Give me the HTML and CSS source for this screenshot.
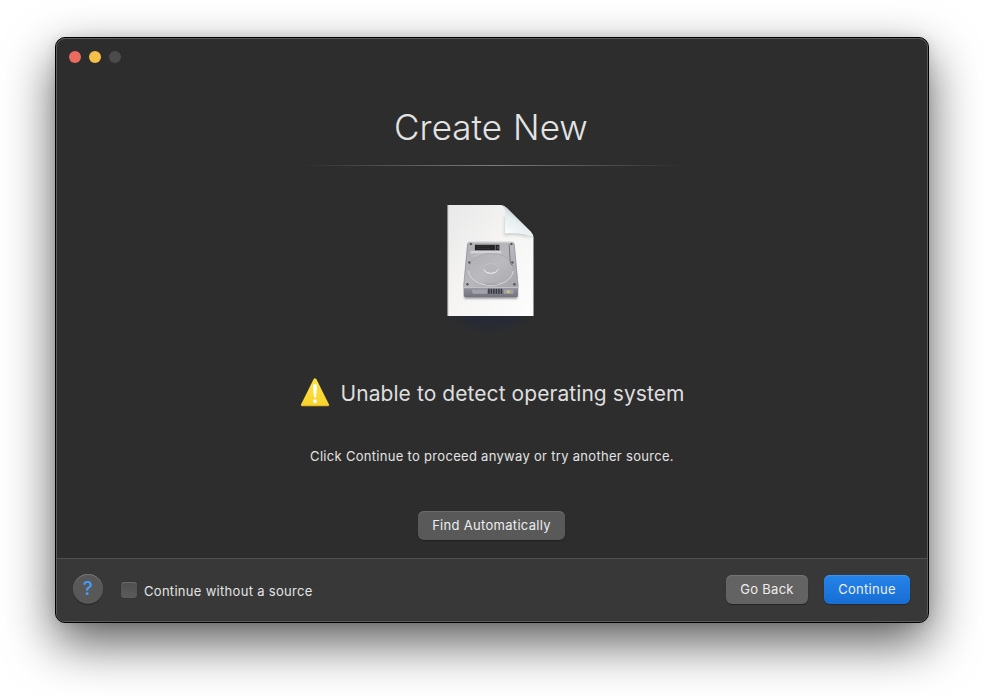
FILE: index.html
```html
<!DOCTYPE html>
<html lang="en">
<head>
<meta charset="utf-8">
<title>Create New</title>
<link rel="stylesheet" href="styles.css">
</head>
<body>
<div class="window">
  <div class="frame">
    <header class="titlebar">
      <span class="light close"></span><span class="light minimize"></span><span class="light disabled"></span>
    </header>
    <main class="content">
      <h1>Create New</h1>
      <div class="rule"></div>
      <svg class="document" width="104" height="140" viewBox="439 200 104 140" aria-hidden="true">
        <defs>
          <linearGradient id="paper" x1="0" y1="0" x2="1" y2="1"><stop offset="0" stop-color="#e8e8e8"/><stop offset=".45" stop-color="#f5f4f3"/><stop offset="1" stop-color="#fdfdfd"/></linearGradient>
          <linearGradient id="curl" x1=".65" y1=".35" x2=".2" y2="1"><stop offset="0" stop-color="#c6d0d4"/><stop offset=".3" stop-color="#e6eef0"/><stop offset="1" stop-color="#fcffff"/></linearGradient>
          <linearGradient id="metal" x1="0" y1="0" x2="1" y2="1"><stop offset="0" stop-color="#b0b0b4"/><stop offset=".5" stop-color="#b8b8bc"/><stop offset="1" stop-color="#a4a4a9"/></linearGradient>
          <linearGradient id="platter" x1="0" y1="0" x2="1" y2="1"><stop offset="0" stop-color="#b0b0b4"/><stop offset=".5" stop-color="#bbbbbf"/><stop offset="1" stop-color="#a8a8ae"/></linearGradient>
          <linearGradient id="front" x1="0" y1="0" x2="0" y2="1"><stop offset="0" stop-color="#9090a0"/><stop offset="1" stop-color="#73737c"/></linearGradient>
          <radialGradient id="glow"><stop offset="0" stop-color="#262a36"/><stop offset=".5" stop-color="#282b34"/><stop offset="1" stop-color="#2d2d2d" stop-opacity="0"/></radialGradient>
          <filter id="soft" x="-20%" y="-50%" width="140%" height="200%"><feGaussianBlur stdDeviation="1.2"/></filter>
        </defs>
        <ellipse cx="490.500" cy="315" rx="51" ry="23" fill="url(#glow)"/>
        <path d="M447.700 205H501Q504 205.500 506 207.500L531 232Q533.500 234.500 533.500 238V316H447.700Z" fill="url(#paper)"/>
        <path d="M448 205V316" stroke="#bfc1c2" stroke-width=".8"/>
        <path d="M504 215L503.500 236Q520 234 532 240" fill="#999" opacity=".3" filter="url(#soft)"/>
        <path d="M501 205Q505.500 207 505.300 214L505 233.800Q523 232.200 533.500 238Q533 234 530.500 231.500L507 208Q504.500 205.500 501 205Z" fill="url(#curl)"/>
        <path d="M505 233.900Q522 232.500 533 237.500" fill="none" stroke="#b9bfc1" stroke-width=".5"/>
        <g transform="translate(.4 0)">
        <path d="M464 292H517V298.500H464Z" fill="#55555c" opacity=".7" filter="url(#soft)"/>
        <path d="M469 241.700H512Q513.700 241.700 514 243.500L518 287.500L516.500 289.500H464.500L463 287.500L467 243.500Q467.200 241.700 469 241.700Z" fill="url(#metal)"/>
        <path d="M468.500 242.200H512.500" stroke="#e2e2e4" stroke-width=".7"/>
        <path d="M463.200 286.500L467.200 244M517.800 286.500L513.800 244" stroke="#88888e" stroke-width=".6"/>
        <path d="M463 287.300H518L517.500 296Q517.400 297 516 297H465Q463.600 297 463.500 296Z" fill="url(#front)"/>
        <path d="M463.200 287.700H517.800" stroke="#d8d8dc" stroke-width=".8"/>
        <path d="M470 251.500H501V254H470ZM470.500 256.500Q479 252.500 490.500 253.500Q501 253.500 507 259" fill="#c0c0c4"/>
        <path d="M470 252H501" stroke="#e8e8ea" stroke-width="1"/>
        <ellipse cx="490.500" cy="269.200" rx="22.500" ry="15.800" fill="url(#platter)" stroke="#a2a2a7" stroke-width=".6"/>
        <path d="M468 270.500C469 279 478 285.300 490.500 285.300C502 285.300 511.500 279.500 513 271" fill="none" stroke="#e7e7e9" stroke-width=".8"/>
        <ellipse cx="490.500" cy="268.500" rx="7.300" ry="4.900" fill="#b6b6ba" stroke="#c6c6c9" stroke-width=".6"/>
        <path d="M483.500 269.500Q485 273.400 490.500 273.400Q496 273.400 497.500 269.500" fill="none" stroke="#eeeeef" stroke-width="1"/>
        <path d="M474.500 244.800H499V250.200H474.500Z" fill="#242426"/>
        <path d="M477 246.200H490M477 248.600H490" stroke="#39393d" stroke-width=".7"/>
        <path d="M495 245V250M497.500 246V249" stroke="#8b8b8e" stroke-width=".7"/>
        <path d="M508.700 244.500L510 263.500L512.500 266" fill="none" stroke="#707076" stroke-width=".9"/>
        <path d="M485 284.200H497" stroke="#96969b" stroke-width=".8"/>
        <g fill="#57575d"><circle cx="470.500" cy="244" r="1.200"/><circle cx="511" cy="244" r="1.200"/><circle cx="469" cy="262.500" r="1.200"/><circle cx="512" cy="262.500" r="1.200"/><circle cx="467" cy="284.300" r="1.300"/><circle cx="514" cy="284.300" r="1.300"/></g>
        <path d="M471 289.500H486.500V293.700H472.500ZM503.500 289.500H513V293.800H503.500Z" fill="#a2a2ac"/>
        <path d="M488.500 288.700V293.800M491 288.700V293.800M493.500 288.700V293.800M496 288.700V293.800M498.500 288.700V293.800M501 288.700V293.800" stroke="#333338" stroke-width="1.500"/>
        <circle cx="508" cy="291.800" r="1.300" fill="#d4d844"/>
        </g>
      </svg>
      <div class="alert">
        <svg width="30" height="30" viewBox="0 0 30 30" aria-hidden="true">
          <defs><linearGradient id="warning" x1="0" y1="0" x2="0" y2="1"><stop offset="0" stop-color="#fce23d"/><stop offset="1" stop-color="#f9d32e"/></linearGradient></defs>
          <path d="M13.700 2Q15 .5 16.300 2L29 27.500Q29.200 29 28 29H2Q.8 29 1 27.500Z" fill="url(#warning)"/>
          <path d="M1.500 28.900H28.500" stroke="#c99f20" stroke-width=".8"/>
          <path d="M13 8.500Q13 7 15 7Q17 7 17 8.500L16.100 20Q15 21.200 13.900 20Z" fill="#fff"/>
          <circle cx="15" cy="24.300" r="2" fill="#fff"/>
        </svg>
        <h2>Unable to detect operating system</h2>
      </div>
      <p>Click Continue to proceed anyway or try another source.</p>
      <button class="find">Find Automatically</button>
    </main>
    <footer>
      <button class="help" aria-label="Help">?</button>
      <label><input type="checkbox"><span>Continue without a source</span></label>
      <button class="back">Go Back</button>
      <button class="continue">Continue</button>
    </footer>
  </div>
</div>
</body>
</html>
```
FILE: styles.css
```css
* { box-sizing: border-box; }
html { background: #fff; }
body {
  margin: 0;
  padding: 37px 55px 0;
  height: 696px;
  overflow: hidden;
  font: 13px/16px Inter, "Liberation Sans", sans-serif;
  color: #e3e3e3;
}
.window {
  width: 874px;
  height: 586px;
  border: 1px solid #000;
  border-radius: 10px;
  background: #2d2d2d;
  box-shadow: 0 20px 50px rgba(0, 0, 0, .64), 0 0 12px rgba(0, 0, 0, .1);
}
.frame {
  height: 584px;
  border: 1px solid #5b5b5b;
  border-radius: 9px;
  overflow: hidden;
  display: flex;
  flex-direction: column;
}
.titlebar { height: 36px; padding: 12px 0 0 12px; display: flex; gap: 8px; }
.light { width: 12px; height: 12px; border-radius: 50%; }
.close { background: #ed6a5f; }
.minimize { background: #f5c04a; }
.disabled { background: #4b4b4b; }
.content {
  flex: 1;
  display: flex;
  flex-direction: column;
  align-items: center;
  padding-right: 2px;
}
h1, h2, p { margin: 0; white-space: nowrap; }
h1 {
  margin-top: 30px;
  font-size: 35px;
  line-height: 44px;
  font-weight: 300;
  letter-spacing: .02px;
  word-spacing: 1.2px;
}
.rule {
  width: 384px;
  height: 1px;
  margin: 16px 0 0 4px;
  background: linear-gradient(90deg, transparent, #7b7e7c 50%, transparent);
}
.document { flex: none; margin-top: 34px; }
.alert { display: flex; align-items: center; gap: 11px; margin: 37px 0 0 2px; height: 30px; }
h2 { padding-top: 4px; font-size: 21px; line-height: 28px; font-weight: 400; letter-spacing: .07px; color: #dedede; }
p { margin: 41px 0 0 2px; letter-spacing: .3px; }
button {
  appearance: none;
  border: 0;
  padding: 0 0 2px;
  height: 29px;
  border-radius: 6px;
  color: #ededed;
  font: inherit;
  letter-spacing: .3px;
  background: #636363;
  box-shadow: inset 0 1px #757575, 0 1px 1px rgba(0, 0, 0, .35);
}
.find { width: 147px; margin: 47px 0 0 1px; background: #595959; box-shadow: inset 0 1px #6b6b6b, 0 1px 1px rgba(0, 0, 0, .3); }
footer {
  height: 63px;
  border-top: 1px solid #515151;
  background: #383838;
  display: flex;
  padding: 15px 17px 0 16px;
}
.help {
  width: 30px;
  height: 30px;
  padding: 0;
  border-radius: 50%;
  background: #585858;
  color: #459cff;
  font-size: 19px;
  font-weight: 500;
}
label { display: flex; align-items: center; height: 31px; margin-left: 18px; gap: 7px; }
input {
  appearance: none;
  width: 16px;
  height: 16px;
  margin: 0;
  border-radius: 3.500px;
  background: linear-gradient(#4f4f4f, #5b5b5b);
  box-shadow: inset 0 1px #6c6c6c, 0 0 1px rgba(0, 0, 0, .4);
}
label span { padding-top: 2px; letter-spacing: .3px; white-space: nowrap; }
.back { width: 82px; margin: 1px 16px 0 auto; }
.continue { width: 86px; margin-top: 1px; background: linear-gradient(#2583ea, #176ed3); box-shadow: inset 0 1px #3f91ed, 0 1px 1px rgba(0, 0, 0, .3); }
```
